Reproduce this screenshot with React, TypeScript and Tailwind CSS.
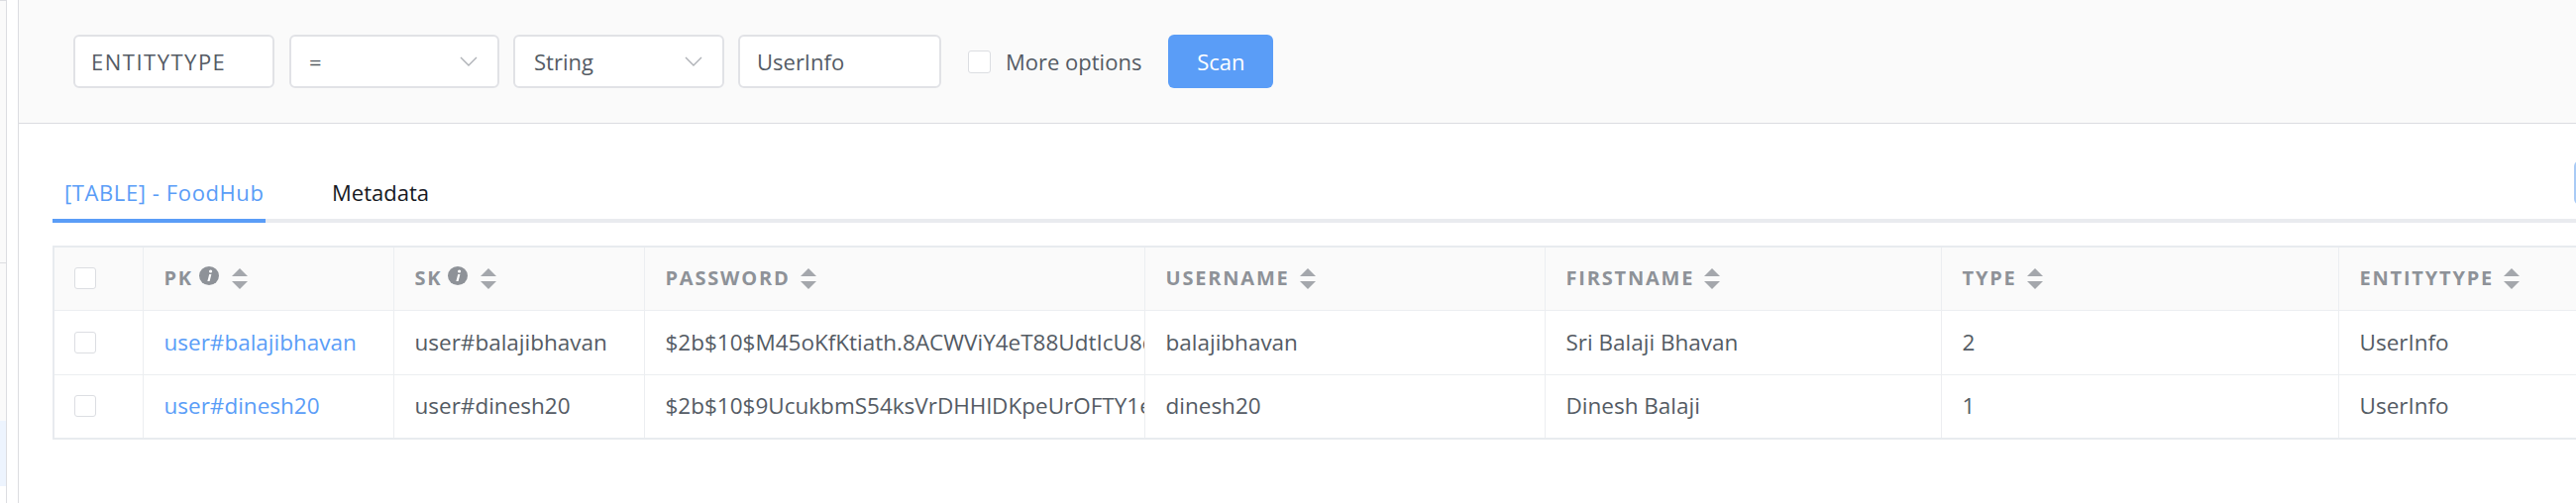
import { Fragment } from "react";

type Column = {
  key: string;
  label: string;
  width: string;
  info?: boolean;
};

const columns: Column[] = [
  { key: "PK", label: "PK", width: "w-[253px]", info: true },
  { key: "SK", label: "SK", width: "w-[253px]", info: true },
  { key: "PASSWORD", label: "PASSWORD", width: "w-[505px]" },
  { key: "USERNAME", label: "USERNAME", width: "w-[404px]" },
  { key: "FIRSTNAME", label: "FIRSTNAME", width: "w-[400px]" },
  { key: "TYPE", label: "TYPE", width: "w-[401px]" },
  { key: "ENTITYTYPE", label: "ENTITYTYPE", width: "w-[400px]" },
];

const rows: Record<string, string>[] = [
  {
    PK: "user#balajibhavan",
    SK: "user#balajibhavan",
    PASSWORD: "$2b$10$M45oKfKtiath.8ACWViY4eT88UdtIcU8q2GmZ0rYxJ3nFaQe",
    USERNAME: "balajibhavan",
    FIRSTNAME: "Sri Balaji Bhavan",
    TYPE: "2",
    ENTITYTYPE: "UserInfo",
  },
  {
    PK: "user#dinesh20",
    SK: "user#dinesh20",
    PASSWORD: "$2b$10$9UcukbmS54ksVrDHHlDKpeUrOFTY1eZk7cWq3Xo.hLpN2aT",
    USERNAME: "dinesh20",
    FIRSTNAME: "Dinesh Balaji",
    TYPE: "1",
    ENTITYTYPE: "UserInfo",
  },
];

const Chevron = () => (
  <svg width="18" height="10" viewBox="0 0 18 10" fill="none">
    <polyline points="1,1 9,9 17,1" stroke="#aeb1b6" strokeWidth="1.4" />
  </svg>
);

const InfoIcon = () => (
  <svg width="20" height="19" viewBox="0 0 20 19">
    <ellipse cx="10" cy="9.5" rx="10" ry="9.5" fill="#8e9298" />
    <circle cx="11.6" cy="5" r="1.6" fill="#fff" />
    <path d="M10.2 8 L12.4 8 L10.6 15 L8.4 15 Z" fill="#fff" />
  </svg>
);

const SortIcon = () => (
  <svg width="16" height="21" viewBox="0 0 16 21">
    <polygon points="8,0 16,8 0,8" fill="#a4a7ac" />
    <polygon points="0,13 16,13 8,21" fill="#a4a7ac" />
  </svg>
);

const Checkbox = () => (
  <div className="h-[22px] w-[22px] rounded-[3px] border border-[#dcdee2] bg-white" />
);

const App = () => {
  return (
    <div className="flex h-[508px] w-[2600px] overflow-hidden bg-white font-['Open_Sans',sans-serif] text-[#545b64]">
      {/* Side rail */}
      <div className="flex w-[7px] shrink-0 flex-col border-r border-[#dcdde1]">
        <div className="h-[266px] border-t border-b border-[#dcdde1] bg-[#fafafa]" />
        <div className="h-[159px] bg-[#fafafa]" />
        <div className="h-[66px] bg-[#edf4fe]" />
      </div>
      <div className="w-[11px] shrink-0" />

      {/* Main */}
      <div className="flex min-w-0 flex-1 flex-col border-l border-[#dcdde1]">
        {/* Scan bar */}
        <div className="flex h-[125px] shrink-0 items-center border-b border-[#dcdde1] bg-[#fafafa] pl-[55px] text-[22px]">
          <div className="flex h-[54px] w-[203px] items-center rounded-[6px] border-2 border-[#e1e2e6] bg-white pl-[16px] tracking-[1.5px]">
            ENTITYTYPE
          </div>
          <div className="ml-[15px] flex h-[54px] w-[212px] items-center justify-between rounded-[6px] border-2 border-[#e1e2e6] bg-white pl-[18px] pr-[20px]">
            <span>=</span>
            <Chevron />
          </div>
          <div className="ml-[14px] flex h-[54px] w-[213px] items-center justify-between rounded-[6px] border-2 border-[#e1e2e6] bg-white pl-[19px] pr-[20px]">
            <span>String</span>
            <Chevron />
          </div>
          <div className="ml-[14px] flex h-[54px] w-[205px] items-center rounded-[6px] border-2 border-[#e1e2e6] bg-white pl-[17px]">
            UserInfo
          </div>
          <div className="ml-[27px] h-[23px] w-[23px] rounded-[3px] border border-[#dcdee2] bg-white" />
          <span className="ml-[15px]">More options</span>
          <button className="ml-[27px] flex h-[54px] w-[106px] items-center justify-center rounded-[6px] bg-[#5a9df7] text-white">
            Scan
          </button>
        </div>

        {/* Tabs */}
        <div className="mt-[37px] ml-[34px] flex h-[63px] shrink-0 border-b-4 border-[#e9ebef] text-[22px]">
          <div className="-mb-[4px] w-[215px] shrink-0 self-end whitespace-nowrap border-b-4 border-[#5a9df7] pb-[12px] pl-[12px] leading-[30px] tracking-[0.6px] text-[#5a9df7]">
            [TABLE] - FoodHub
          </div>
          <div className="-mb-[4px] ml-[55px] self-end whitespace-nowrap border-b-4 border-transparent px-[12px] pb-[12px] leading-[30px] text-[#16191f]">
            Metadata
          </div>
          <button className="mr-[-98px] ml-auto h-[45px] w-[100px] shrink-0 rounded-[6px] border-2 border-[#a9cbf6] bg-white" />
        </div>

        {/* Items table */}
        <div className="mt-[23px] ml-[34px]">
          <table className="w-[2706px] table-fixed border-collapse border-2 border-[#e8ebef] text-left">
            <colgroup>
              <col className="w-[90px]" />
              {columns.map((c) => (
                <col key={c.key} className={c.width} />
              ))}
            </colgroup>
            <thead>
              <tr className="h-[64px] bg-[#fafafa]">
                <th className="border border-[#eceef1] pl-[20px]">
                  <Checkbox />
                </th>
                {columns.map((c) => (
                  <th key={c.key} className="border border-[#eceef1] pl-[21px]">
                    <div className="flex items-center">
                      <span className="text-[20px] font-bold tracking-[1.8px] text-[#8e9298]">
                        {c.label}
                      </span>
                      {c.info && (
                        <span className="ml-[6px] -mt-[6px]">
                          <InfoIcon />
                        </span>
                      )}
                      <span className={c.info ? "ml-[13px]" : "ml-[10px]"}>
                        <SortIcon />
                      </span>
                    </div>
                  </th>
                ))}
              </tr>
            </thead>
            <tbody>
              {rows.map((r, i) => (
                <tr key={i} className="h-[65px] bg-white">
                  <td className="border border-[#eceef1] pl-[20px]">
                    <Checkbox />
                  </td>
                  {columns.map((c) => (
                    <Fragment key={c.key}>
                      <td className="border border-[#eceef1] pl-[21px] text-[22.5px]">
                        <div
                          className={`overflow-hidden whitespace-nowrap ${
                            c.key === "PK" ? "text-[#5a9df7]" : "text-[#545b64]"
                          }`}
                        >
                          {r[c.key]}
                        </div>
                      </td>
                    </Fragment>
                  ))}
                </tr>
              ))}
            </tbody>
          </table>
        </div>
      </div>
    </div>
  );
};

export default App;
